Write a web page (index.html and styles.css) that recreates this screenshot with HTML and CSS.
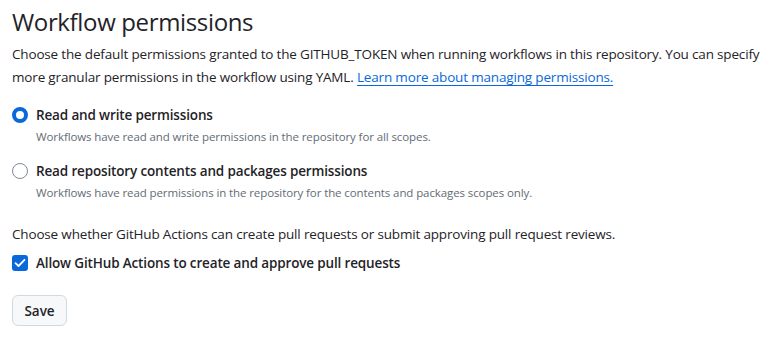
FILE: index.html
```html
<!DOCTYPE html>
<html>
<head>
<meta charset="utf-8">
<link rel="stylesheet" href="styles.css">
</head>
<body>
<main class="page">
  <h2 class="title">Workflow permissions</h2>
  <p class="intro">Choose the default permissions granted to the GITHUB_TOKEN when running workflows in this repository. You can specify more granular permissions in the workflow using YAML. <a class="link" href="#">Learn more about managing permissions.</a></p>

  <div class="options">
    <label class="option">
      <span class="radio radio-checked"></span>
      <span class="option-text">
        <span class="option-label">Read and write permissions</span>
        <span class="option-note">Workflows have read and write permissions in the repository for all scopes.</span>
      </span>
    </label>
    <label class="option">
      <span class="radio"></span>
      <span class="option-text">
        <span class="option-label">Read repository contents and packages permissions</span>
        <span class="option-note">Workflows have read permissions in the repository for the contents and packages scopes only.</span>
      </span>
    </label>
  </div>

  <p class="intro second">Choose whether GitHub Actions can create pull requests or submit approving pull request reviews.</p>
  <label class="check-row">
    <span class="checkbox">
      <svg width="12" height="10" viewBox="0 0 12 10"><path d="M1.5 5.2 L4.5 8 L10.5 1.8" fill="none" stroke="#fff" stroke-width="1.8" stroke-linecap="round" stroke-linejoin="round"/></svg>
    </span>
    <span class="option-label">Allow GitHub Actions to create and approve pull requests</span>
  </label>

  <button class="btn">Save</button>
</main>
</body>
</html>
```
FILE: styles.css
```css
* { box-sizing: border-box; }
body {
  margin: 0;
  background: #ffffff;
  color: #1f2328;
  font-family: "Open Sans", "Noto Sans", sans-serif;
}
.page {
  padding: 4px 0 0 12px;
  display: flex;
  flex-direction: column;
  align-items: flex-start;
}
.title {
  margin: 0;
  font-size: 24px;
  font-weight: 400;
  line-height: 36px;
  letter-spacing: -0.35px;
}
.intro {
  margin: 3px 0 0 0;
  font-size: 13.5px;
  letter-spacing: -0.17px;
  line-height: 23px;
}
.link {
  color: #0969da;
  text-decoration: underline;
  text-underline-offset: 3px;
}
.options {
  margin-top: 15px;
  display: flex;
  flex-direction: column;
  gap: 12px;
}
.option {
  display: flex;
  gap: 8px;
  align-items: flex-start;
}
.radio {
  width: 16px;
  height: 16px;
  border-radius: 50%;
  border: 1px solid #818b98;
  margin-top: 3px;
  flex: none;
}
.radio-checked {
  border: 4.5px solid #0969da;
}
.option-text {
  display: flex;
  flex-direction: column;
}
.option-label {
  font-size: 13.5px;
  letter-spacing: -0.15px;
  font-weight: 600;
  line-height: 22px;
}
.option-note {
  font-size: 11.5px;
  letter-spacing: -0.1px;
  color: #636c76;
  line-height: 22px;
}
.second { margin-top: 19px; }
.check-row {
  margin-top: 6px;
  display: flex;
  align-items: center;
  gap: 8px;
}
.checkbox {
  width: 16px;
  height: 16px;
  border-radius: 3px;
  background: #0969da;
  display: flex;
  align-items: center;
  justify-content: center;
}
.btn {
  margin-top: 21px;
  font-family: inherit;
  font-size: 13.5px;
  font-weight: 600;
  color: #1f2328;
  background: #f6f8fa;
  border: 1px solid #d1d9e0;
  border-radius: 6px;
  height: 31px;
  width: 55px;
  padding: 0;
}
```
